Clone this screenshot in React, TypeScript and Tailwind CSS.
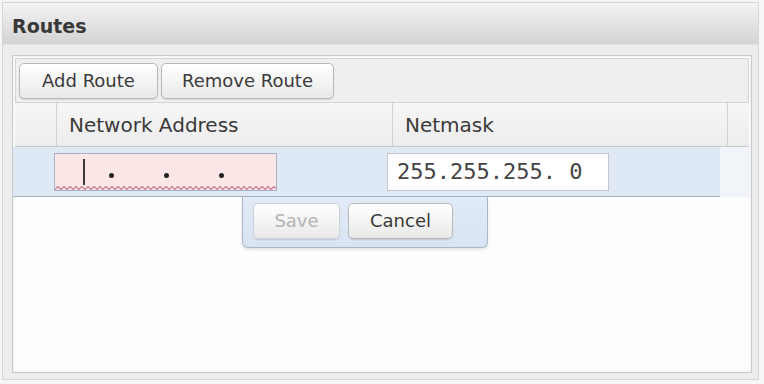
import React from "react";

const sans = "font-['DejaVu_Sans','Verdana',sans-serif]";

function Btn({ label, w, disabled }: { label: string; w: string; disabled?: boolean }) {
  return (
    <div
      className={`${w} h-[36px] flex items-center justify-center rounded-[5px] border border-[#b9b9b9] bg-gradient-to-b from-[#ffffff] to-[#e9e9e9] shadow-[0_1px_1px_rgba(0,0,0,0.12)] text-[18px] ${
        disabled ? "text-[#b4b4b4] border-[#cfd3d8]" : "text-[#3a3a3a]"
      }`}
    >
      {label}
    </div>
  );
}

function Squiggle() {
  // spellcheck style wavy underline
  const pts: string[] = [];
  for (let x = 0; x <= 224; x += 3) pts.push(`${x},${(x / 3) % 2 === 0 ? 3.5 : 0.5}`);
  return (
    <svg width="221" height="4" className="block">
      <polyline points={pts.join(" ")} fill="none" stroke="#c97a98" strokeWidth="1.2" />
    </svg>
  );
}

export default function App() {
  return (
    <div className={`w-[764px] h-[384px] bg-[#f6f6f6] p-[2px] ${sans}`}>
      <div className="h-[378px] w-[757px] border border-[#d6d6d6] bg-[#ededed] flex flex-col">
        {/* title bar */}
        <div className="h-[42px] flex items-center px-[9px] pt-[5px] bg-gradient-to-b from-[#f4f4f4] to-[#d3d3d3] border-b border-[#e4e4e4]">
          <span className="text-[19px] font-bold text-[#383838]">Routes</span>
        </div>

        <div className="flex-1 flex flex-col pl-[9px] pr-[6px] pt-[10px] pb-[6px]">
          <div className="flex-1 flex flex-col border border-[#cbcbcb] bg-[#fdfdfd] shadow-[inset_0_0_0_1px_#f2f2f2]">
            {/* toolbar */}
            <div className="mx-[2px] mt-[2px] h-[45px] border border-[#d3d3d3] bg-[#efefef] flex items-center gap-[3px] px-[3px]">
              <Btn label="Add Route" w="w-[139px]" />
              <Btn label="Remove Route" w="w-[173px]" />
            </div>

            {/* column headers */}
            <div className="mx-[2px] h-[44px] flex border-b border-[#c9c9c9] bg-gradient-to-b from-[#f7f7f7] to-[#ececec] text-[20px] text-[#3a3a3a]">
              <div className="w-[42px] border-r border-[#d2d2d2]" />
              <div className="w-[336px] border-r border-[#d2d2d2] flex items-center pl-[12px]">Network Address</div>
              <div className="w-[335px] border-r border-[#d2d2d2] flex items-center pl-[12px]">Netmask</div>
              <div className="flex-1" />
            </div>

            {/* editing row */}
            <div className="h-[50px] flex">
              <div className="w-[707px] bg-[#dfe9f6] border-b border-[#a9b3bd] flex items-center">
                <div className="ml-[41px] w-[223px] h-[38px] border border-[#a5b3c4] bg-[#fde6e6] flex flex-col">
                  <div className="flex-1 flex items-end pl-[28px] pb-[1px]">
                    <div className="w-[2px] h-[26px] bg-[#3a3a3a]" />
                    <div className="ml-[24px] mb-[7px] w-[5px] h-[5px] rounded-full bg-[#222]" />
                    <div className="ml-[50px] mb-[7px] w-[5px] h-[5px] rounded-full bg-[#222]" />
                    <div className="ml-[50px] mb-[7px] w-[5px] h-[5px] rounded-full bg-[#222]" />
                  </div>
                  <Squiggle />
                </div>
                <div className="ml-[110px] w-[222px] h-[38px] border border-[#c4c8cc] bg-white flex items-center pl-[9px] font-['DejaVu_Sans_Mono',monospace] text-[22px] text-[#444]">
                  255.255.255. 0
                </div>
              </div>
              <div className="flex-1 bg-[#f1f5fa]" />
            </div>

            {/* row editor buttons */}
            <div className="ml-[229px] w-[246px] h-[51px] bg-gradient-to-b from-[#e2ebf7] to-[#d8e4f3] border border-t-0 border-[#aab6c4] rounded-b-[6px] shadow-[0_2px_3px_rgba(0,0,0,0.1)] flex items-center gap-[8px] pl-[10px] pb-[3px]">
              <Btn label="Save" w="w-[87px]" disabled />
              <Btn label="Cancel" w="w-[105px]" />
            </div>
          </div>
        </div>
      </div>
    </div>
  );
}
